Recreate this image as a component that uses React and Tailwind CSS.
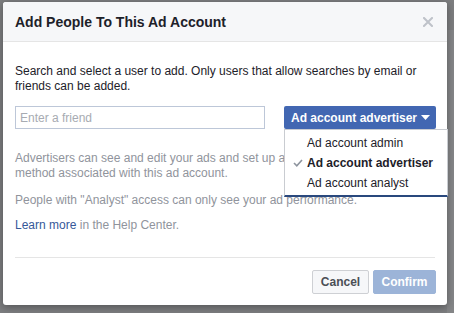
import React from "react";

export default function App() {
  const font = { fontFamily: '"Liberation Sans", Arial, Helvetica, sans-serif' };
  return (
    <div
      className="w-[454px] h-[313px] overflow-hidden bg-[#7d7e80] flex items-start"
      style={font}
    >
      <div className="w-[3px] h-full shrink-0" />
      <div className="relative mt-[2px] w-[444px] h-[303px] shrink-0 bg-white rounded-[3px] shadow-[0_2px_8px_rgba(0,0,0,0.35)]">
        <div className="h-[40px] box-border bg-[#f6f7f9] border-b border-[#e5e5e5] rounded-t-[3px] flex items-center justify-between pl-[12px] pr-[11px]">
          <div className="text-[14px] font-bold text-[#1d2129] leading-[18px]">
            Add People To This Ad Account
          </div>
          <svg width="10" height="10" viewBox="0 0 10 10" className="mr-[3px]">
            <path d="M1 1 L9 9 M9 1 L1 9" stroke="#bec2c9" strokeWidth="2" strokeLinecap="square" />
          </svg>
        </div>

        <div className="pl-[12px] pr-[11px] pt-[22px] text-[12px]">
          <p className="text-[#1d2129] leading-[15px] whitespace-nowrap">
            Search and select a user to add. Only users that allow searches by email or
            <br />
            friends can be added.
          </p>

          <div className="mt-[12px] flex items-center justify-between">
            <div className="w-[250px] h-[23px] box-border border border-[#bdc7d8] flex items-center pl-[4px] text-[12px] text-[#a7abb2]">
              Enter a friend
            </div>
            <div className="relative">
              <div className="w-[152px] h-[23px] box-border bg-[#4267b2] rounded-[2px] flex items-center pl-[7px] pr-[5px] text-white font-bold text-[12px]">
                <span>Ad account advertiser</span>
                <svg width="9" height="5" viewBox="0 0 9 5" className="ml-auto mr-[1px]">
                  <path d="M0 0 L9 0 L4.5 5 Z" fill="#ffffff" />
                </svg>
              </div>
              <div className="absolute left-0 top-[23px] w-[164px] box-border bg-white border border-[#c9ccd1] border-b-2 border-b-[#29487d] z-10 text-[12px] text-[#1d2129] pt-[3px] pb-[2px] flex flex-col">
                <div className="h-[20px] flex items-center pl-[22px]">Ad account admin</div>
                <div className="h-[20px] flex items-center font-bold">
                  <svg width="22" height="8" viewBox="0 0 22 8">
                    <path d="M9 4 L11.8 6.8 L17 1" stroke="#8d949e" strokeWidth="1.6" fill="none" />
                  </svg>
                  Ad account advertiser
                </div>
                <div className="h-[20px] flex items-center pl-[22px]">Ad account analyst</div>
              </div>
            </div>
          </div>

          <p className="mt-[22px] text-[#90949c] leading-[15px] whitespace-nowrap">
            Advertisers can see and edit your ads and set up a payment
            <br />
            method associated with this ad account.
          </p>
          <p className="mt-[12px] text-[#90949c] leading-[15px]">
            People with "Analyst" access can only see your ad performance.
          </p>
          <p className="mt-[10px] text-[#90949c] leading-[15px]">
            <span className="text-[#365899]">Learn more</span> in the Help Center.
          </p>

          <div className="mt-[24px] w-[420px] border-t border-[#e5e5e5]" />

          <div className="mt-[12px] flex justify-end gap-[4px]">
            <div className="w-[57px] h-[24px] box-border border border-[#ced0d4] bg-[#f6f7f9] rounded-[2px] flex items-center justify-center font-bold text-[12px] text-[#4b4f56]">
              Cancel
            </div>
            <div className="w-[63px] h-[24px] box-border border border-[#9cb4d8] bg-[#9cb4d8] rounded-[2px] flex items-center justify-center font-bold text-[12px] text-white">
              Confirm
            </div>
          </div>
        </div>
      </div>
      <div className="flex-1 h-full mt-[30px] bg-[#858688]" />
    </div>
  );
}
